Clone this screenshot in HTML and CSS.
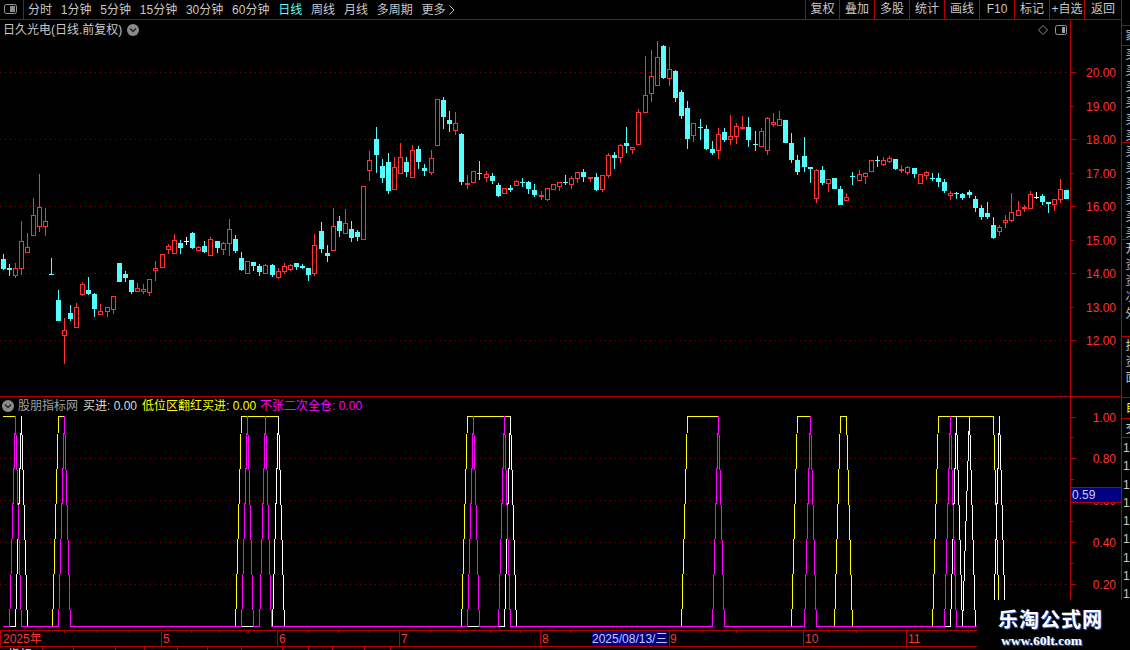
FILE: index.html
```html
<!DOCTYPE html>
<html lang="zh">
<head>
<meta charset="utf-8">
<title>日久光电</title>
<link rel="stylesheet" href="styles.css">
</head>
<body>
<div class="app">
  <div class="main">
    <header class="toolbar">
      <button class="layout-btn">
        <svg class="pane-icon" width="13" height="10" viewBox="0 0 13 10"><rect x="0.5" y="0.5" width="12" height="9" rx="2" fill="none" stroke="#9a9a9a"/><rect x="6" y="2" width="5" height="6" fill="#8c8c8c"/></svg>
      </button>
      <nav class="tabs">
        <span>分时</span><span>1分钟</span><span>5分钟</span><span>15分钟</span><span>30分钟</span><span>60分钟</span>
        <span class="active">日线</span><span>周线</span><span>月线</span><span>多周期</span>
        <span class="more">更多<svg width="6" height="10" viewBox="0 0 6 10"><polyline points="0.5,0.5 5,5 0.5,9.5" fill="none" stroke="#c8c8c8"/></svg></span>
      </nav>
      <div class="tools">
        <span>复权</span><span>叠加</span><span>多股</span><span>统计</span><span>画线</span><span>F10</span><span>标记</span><span>+自选</span><span>返回</span>
      </div>
    </header>

    <section class="panel panel-price">
      <div class="plot">
        <svg id="price-chart" class="chart" width="1070" height="376" viewBox="0 20 1070 376"></svg>
        <div class="legend">
          <span class="stock">日久光电(日线.前复权)</span>
          <svg class="round" width="12" height="12" viewBox="0 0 12 12"><circle cx="6" cy="6" r="6" fill="#8a8a8a"/><polyline points="3,4.5 6,7.5 9,4.5" fill="none" stroke="#222" stroke-width="1.4"/></svg>
        </div>
        <div class="plot-tools">
          <svg width="10" height="10" viewBox="0 0 10 10"><polygon points="5,0.5 9.5,5 5,9.5 0.5,5" fill="none" stroke="#8a8a8a"/></svg>
          <svg width="13" height="10" viewBox="0 0 13 10"><rect x="0.5" y="0.5" width="11" height="9" rx="2" fill="none" stroke="#9a9a9a"/><rect x="7" y="2" width="3" height="6" fill="#a0a0a0"/></svg>
        </div>
      </div>
      <div class="yaxis" id="price-axis"></div>
    </section>

    <section class="panel panel-indicator">
      <div class="plot">
        <svg id="indicator-chart" class="chart" width="1070" height="233" viewBox="0 397 1070 233"></svg>
        <div class="legend legend-indicator">
          <svg class="round" width="12" height="12" viewBox="0 0 12 12"><circle cx="6" cy="6" r="6" fill="#8a8a8a"/><polyline points="3,4.5 6,7.5 9,4.5" fill="none" stroke="#222" stroke-width="1.4"/></svg>
          <span class="name">股朋指标网</span>
          <span class="white">买进: 0.00</span>
          <span class="yellow">低位区翻红买进: 0.00</span>
          <span class="magenta">不张二次全仓: 0.00</span>
        </div>
      </div>
      <div class="yaxis" id="indicator-axis">
        <div class="cursor-value">0.59</div>
      </div>
    </section>

    <div class="timeaxis" id="timeaxis"></div>
    <div class="footer" id="footer"></div>
  </div>

  <aside class="sidebar">
    <div class="cell c1"><span>家</span></div>
    <div class="cell c2"><span>买买买买买买</span></div>
    <div class="cell c2"><span>买买买买买买</span></div>
    <div class="cell c2"><span>开资资况外</span></div>
    <div class="cell c3"><span>技资面</span></div>
    <div class="cell c4"><span>自</span></div>
    <div class="cell c5"><span>交</span></div>
    <div class="numbers"><span>1</span><span>1</span><span>1</span><span>1</span><span>1</span><span>1</span><span>1</span><span>1</span><span>1</span></div>
  </aside>

  <div class="watermark">
    <div class="wm-title">乐淘公式网</div>
    <div class="wm-url">www.60lt.com</div>
  </div>
</div>
<script src="chart.js"></script>
</body>
</html>
```

FILE: styles.css
```css
* { box-sizing: border-box; }
html, body { margin: 0; padding: 0; background: #000; }
body { width: 1130px; height: 650px; overflow: hidden; }

.app {
  position: relative;
  display: flex;
  width: 1130px;
  height: 650px;
  overflow: hidden;
  background: #000;
  color: #c8c8c8;
  font: 12px/14px "Liberation Sans", "Noto Sans CJK SC", sans-serif;
}

.main {
  display: flex;
  flex-direction: column;
  flex: 0 0 1122px;
  height: 650px;
  border-right: 1px solid #b40000;
}

/* toolbar */
.toolbar {
  display: flex;
  align-items: center;
  flex: 0 0 20px;
  border-bottom: 1px solid #b40000;
}
.layout-btn {
  display: flex;
  align-items: center;
  justify-content: center;
  flex: 0 0 24px;
  height: 19px;
  margin: 0;
  padding: 0 2px 1px 0;
  background: none;
  border: 0;
  border-right: 1px solid #b40000;
}
.tabs {
  display: flex;
  gap: 8.8px;
  padding-left: 4px;
  white-space: nowrap;
}
.tabs .active { color: #55ffff; }
.more { display: inline-flex; align-items: center; gap: 3px; }
.tools { display: flex; margin-left: auto; height: 19px; }
.tools span {
  flex: 0 0 35px;
  line-height: 18px;
  text-align: center;
  border-left: 1px solid #b40000;
  white-space: nowrap;
}
.tools span:first-child { flex-basis: 34px; }
.tools span:last-child { flex-basis: 37px; }

/* panels */
.panel { display: flex; }
.panel-price { flex: 0 0 376px; }
.panel-indicator { flex: 0 0 234px; border-top: 1px solid #b40000; }
.plot { position: relative; flex: 0 0 1070px; }
.chart { display: block; shape-rendering: crispEdges; }
.yaxis {
  position: relative;
  flex: 1;
  border-left: 1px solid #b40000;
}
.ylabel {
  position: absolute;
  right: 5px;
  height: 14px;
  color: #ff3232;
  line-height: 14px;
}
.tick { position: absolute; left: 0; height: 1px; background: #b40000; }
.tick.major { width: 5px; }
.tick.minor { width: 3px; }
.cursor-value {
  position: absolute;
  z-index: 2;
  top: 90px;
  left: 0;
  right: 0;
  height: 16px;
  padding-left: 1px;
  background: #000080;
  border-top: 1px solid #b40000;
  border-bottom: 1px solid #b40000;
  color: #c8c8ff;
  line-height: 14px;
}

/* legends */
.legend {
  position: absolute;
  top: 3px;
  left: 3px;
  display: flex;
  align-items: center;
  gap: 5px;
  white-space: nowrap;
}
.legend .round { flex: none; }
.legend-indicator { top: 2px; left: 2px; gap: 5px; }
.legend-indicator .round { margin-right: -1px; }
.name { color: #a0a0a0; }
.white { color: #dcdcdc; }
.yellow { color: #ffff00; }
.magenta { color: #ff00ff; margin-left: -1px; }
.plot-tools {
  position: absolute;
  top: 5px;
  right: 2px;
  display: flex;
  gap: 7px;
}
.plot-tools svg { display: block; }

/* time axis */
.timeaxis {
  position: relative;
  flex: 0 0 17px;
  border-top: 1px solid #b40000;
  border-bottom: 1px solid #b40000;
}
.tlabel {
  position: absolute;
  top: 1px;
  color: #ff3232;
  line-height: 14px;
  white-space: nowrap;
}
.tlabel.date { background: #000080; color: #c8c8ff; }
.tmark { position: absolute; top: 0; width: 1px; height: 2px; background: #b40000; }
.tmark.month { height: 15px; }

.footer { display: flex; flex: 1; overflow: hidden; }
.footer span {
  flex: none;
  height: 14px;
  padding: 1px 0 0 8px;
  border-right: 1px solid #b40000;
  color: #e0e0e0;
  line-height: 14px;
}

/* sidebar */
.sidebar {
  display: flex;
  flex-direction: column;
  flex: 1;
  padding-top: 25px;
  overflow: hidden;
}
.cell {
  flex: none;
  overflow: hidden;
  border-top: 1px solid #b40000;
  width: 12px;
}
.cell span {
  display: block;
  padding-left: 1px;
  writing-mode: vertical-lr;
  text-orientation: upright;
  letter-spacing: 4.3px;
  white-space: nowrap;
}
.c1 { height: 20px; }
.c1 span { padding-top: 3px; }
.c2 { height: 97px; }
.c2 span { padding-top: 2px; }
.c3 { height: 61px; }
.c3 span { padding-top: 2px; }
.c4 { height: 21px; border-top-color: #b40000; color: #ffff00; }
.c4 span { padding-top: 3px; }
.c5 { height: 20px; border-bottom: 1px solid #b40000; }
.c5 span { padding-top: 3px; }
.numbers { display: flex; flex-direction: column; padding: 1px 0 0 1px; }
.numbers span { flex: 0 0 18.3px; line-height: 18.3px; }

/* watermark */
.watermark {
  position: absolute;
  left: 977px;
  top: 600px;
  z-index: 3;
  width: 153px;
  height: 50px;
  padding-left: 21px;
  background: #000;
  color: #fff;
  font-weight: 700;
}
.wm-title {
  margin-top: 7px;
  font: 700 20px/24px "Noto Sans CJK SC", sans-serif;
  letter-spacing: 1px;
  text-shadow: 1px 1px 1px #3a6ed0;
}
.wm-url {
  margin: 2px 0 0 3px;
  font: 700 13.5px/15px "Liberation Serif", serif;
  text-shadow: 1px 1px 1px #3a6ed0;
}
```

FILE: chart.js
```js
var NS = 'http://www.w3.org/2000/svg';
var RED = '#ff3333', CYAN = '#55ffff', WHITE = '#ffffff';
var GRID = '#960000';

/* candles measured per crop: [ox, oy, [type, x, high, top, bottom, low]...] in thirds of a pixel */
var zones = [
  [0, 170, [
    'c',10,252,267,297,300, 'c',28,282,293,300,318, 'r',46,279,295,317,324, 'r',64,153,214,296,315,
    'r',82,190,232,248,248, 'r',100,84,136,197,197, 'r',118,12,112,170,186, 'r',136,114,154,170,197,
    'c',154,264,312,315,315, 'c',175,360,390,453,453, 'r',193,444,481,497,582, 'c',211,405,429,447,453,
    'r',229,400,412,473,473, 'r',247,336,343,374,378, 'c',265,321,360,372,375, 'c',283,369,372,417,441,
    'r',301,402,424,434,434, 'r',322,411,412,426,441, 'r',340,379,379,419,432, 'c',358,279,279,336,336,
    'c',376,303,312,324,336, 'c',394,330,330,366,372, 'r',412,339,355,365,365, 'r',430,342,358,366,372,
    'r',448,327,328,368,378, 'r',466,273,295,302,333, 'r',487,252,253,293,293, 'r',505,222,229,239,252,
    'r',523,192,211,251,251, 'c',541,210,220,234,252, 'w',559,201,212,215,225, 'c',577,186,189,234,237,
    'r',595,229,232,242,242
  ]],
  [200, 90, [
    'c',13,453,468,486,489, 'r',31,441,448,497,497, 'c',52,453,453,474,489, 'r',70,456,460,479,495,
    'r',88,387,418,461,498, 'c',106,435,447,483,489, 'c',124,486,504,540,543, 'r',142,514,514,551,551,
    'c',160,516,516,528,543, 'c',178,522,528,546,558, 'r',196,522,526,551,551, 'c',217,522,525,555,561,
    'r',235,534,544,564,567, 'r',253,519,529,545,551, 'r',271,522,526,539,543, 'c',289,519,519,531,540,
    'c',307,522,528,534,537, 'c',325,534,534,555,573, 'r',343,432,466,551,558, 'c',364,396,423,477,489,
    'c',382,465,489,498,516, 'r',400,354,409,482,482, 'c',418,378,393,423,441, 'r',436,357,400,433,433,
    'c',454,393,417,444,456, 'c',472,420,426,441,453, 'r',490,289,289,449,449, 'r',508,183,211,242,273,
    'c',529,111,147,195,249, 'c',547,207,228,264,279, 'c',565,189,216,303,312, 'r',583,201,232,299,299,
    'r',601,159,202,251,251, 'c',619,201,216,246,261, 'r',637,165,181,263,263, 'c',655,168,177,216,237,
    'c',673,222,234,243,258, 'r',694,180,205,248,255, 'r',712,27,27,167,167, 'c',730,21,30,81,117,
    'c',748,63,90,102,126, 'r',766,66,100,122,135, 'c',784,129,132,276,285, 'r',802,255,280,285,297,
    'r',820,244,244,278,278, 'c',838,213,249,252,270, 'r',859,243,253,263,276, 'c',877,249,258,273,282,
    'c',895,279,285,318,321
  ]],
  [500, 40, [
    'r',13,445,445,461,461, 'c',31,435,444,450,456, 'r',49,420,424,437,437, 'c',67,414,426,429,441,
    'c',85,423,426,447,462, 'c',103,432,450,465,471, 'r',124,453,466,470,480, 'r',142,445,445,480,483,
    'r',160,433,433,449,449, 'r',178,427,427,440,453, 'c',196,405,426,429,435, 'r',214,408,415,434,447,
    'r',232,397,397,418,429, 'c',250,387,396,411,426, 'r',271,412,412,418,426, 'c',289,400,411,450,453,
    'r',307,405,406,449,456, 'r',325,340,346,407,414, 'c',343,336,345,354,387, 'r',361,312,316,353,369,
    'c',379,261,309,318,339, 'r',397,322,322,329,342, 'r',415,207,217,314,314, 'r',436,48,166,218,218,
    'r',454,30,109,161,186, 'r',472,3,52,137,137, 'c',490,15,18,114,117, 'r',508,21,88,116,138,
    'c',526,90,93,174,186, 'c',544,150,156,228,237, 'c',562,183,204,297,327, 'r',580,250,250,287,306,
    'c',601,237,261,264,300, 'c',619,255,267,327,330, 'c',637,303,327,339,345, 'r',655,264,283,332,357,
    'c',673,264,276,300,306, 'r',691,225,289,299,315, 'r',709,250,259,292,312, 'r',727,228,261,264,270,
    'c',745,231,261,300,321, 'c',766,273,312,315,333, 'r',784,264,274,320,321, 'r',802,231,235,332,345,
    'r',820,219,247,255,261, 'r',838,213,238,257,258, 'c',856,240,240,309,309, 'c',874,279,309,360,369,
    'c',892,345,360,396,405
  ]],
  [790, 110, [
    'c',43,81,138,171,186, 'c',61,171,171,176,219, 'r',79,178,181,268,279, 'c',97,168,180,219,225,
    'r',115,207,207,221,246, 'c',133,204,204,237,237, 'c',151,228,237,285,285, 'r',169,249,262,272,272,
    'c',187,186,198,201,225, 'r',208,180,193,213,213, 'r',226,186,189,201,222, 'r',244,150,151,185,185,
    'c',262,138,150,153,171, 'r',280,141,150,165,168, 'r',298,138,144,156,159, 'c',316,147,147,177,180,
    'r',334,165,178,181,189, 'r',352,168,171,189,195, 'c',373,174,174,192,204, 'r',391,192,192,221,221,
    'r',409,183,186,198,210, 'c',427,189,204,207,213, 'c',445,189,204,216,231, 'c',463,207,216,243,249,
    'r',481,243,249,258,270, 'c',499,246,249,252,267, 'c',517,249,252,264,270, 'c',538,240,246,255,264,
    'c',556,258,267,294,306, 'c',574,285,294,321,330, 'c',592,276,309,321,327, 'c',610,321,345,384,387,
    'r',628,345,351,366,378, 'r',646,315,331,339,354, 'r',664,249,307,332,336, 'r',685,273,301,317,318,
    'r',703,285,292,296,306, 'r',721,243,253,296,297, 'w',739,246,261,264,267, 'c',757,252,258,276,285,
    'c',775,276,276,282,309, 'r',793,268,268,285,303, 'r',811,207,238,269,279, 'c',829,240,240,267,267
  ]]
];

function el(parent, name, attrs) {
  var node = document.createElementNS(NS, name);
  for (var key in attrs) node.setAttribute(key, attrs[key]);
  parent.appendChild(node);
  return node;
}

function grid(svg, ys) {
  ys.forEach(function (y) {
    el(svg, 'line', { x1: 0, x2: 1067, y1: y + 0.5, y2: y + 0.5, stroke: GRID, 'stroke-dasharray': '1 4' });
  });
}

function segment(svg, x, y1, y2, color) {
  if (y2 > y1) el(svg, 'line', { x1: x, x2: x, y1: y1, y2: y2, stroke: color });
}

function drawCandles(svg) {
  zones.forEach(function (zone) {
    var ox = zone[0], oy = zone[1], d = zone[2];
    for (var i = 0; i < d.length; i += 6) {
      var type = d[i];
      var cx = Math.floor(ox + d[i + 1] / 3) + 0.5;
      var hi = Math.round(oy + d[i + 2] / 3);
      var top = Math.round(oy + d[i + 3] / 3);
      var bot = Math.round(oy + d[i + 4] / 3);
      var lo = Math.round(oy + d[i + 5] / 3);
      if (bot <= top) bot = top + 1;
      var color = type === 'r' ? RED : type === 'w' ? WHITE : CYAN;
      segment(svg, cx, hi, top, color);
      segment(svg, cx, bot, lo, color);
      if (type === 'r') {
        el(svg, 'rect', { x: cx - 2, y: top + 0.5, width: 4, height: Math.max(bot - top - 1, 1), fill: '#000', stroke: color });
      } else {
        el(svg, 'rect', { x: cx - 2.5, y: top, width: 5, height: bot - top, fill: color });
      }
    }
  });
}

/* indicator: each pulse is [first high bar, last high bar]; bars are 6px apart */
var ZERO = 626.5, ONE = 416.5, START = 3, END = 977;

function pulses(list, startHigh) {
  var pts = [];
  pts.push([START, startHigh ? ONE : ZERO]);
  list.forEach(function (p) {
    var a = Math.floor(p[0]) + 0.5, b = Math.floor(p[1]) + 0.5;
    if (!(startHigh && p === list[0])) {
      pts.push([a - (p[2] || 6), ZERO]);
      pts.push([a, ONE]);
    }
    pts.push([b, ONE]);
    pts.push([b + (p[3] || 6), ZERO]);
  });
  pts.push([END, ZERO]);
  return pts.map(function (q) { return q[0] + ',' + q[1]; }).join(' ');
}

function drawIndicator(svg) {
  grid(svg, [458, 500, 542, 584]);
  var yellow = [[3, 15], [58, 64], [241, 278], [467, 510], [687, 718], [797, 810], [840, 846], [938, 993]];
  var white = [[21, 21], [64, 64], [265, 265, 6, 6], [278, 278], [510, 510], [718, 718], [810, 810], [956, 956], [969, 969, 7, 6], [999, 999]];
  var magenta = [[15, 15], [64, 64], [247, 247], [265, 265, 6, 6], [473, 473], [504, 504], [718, 718], [810, 810], [950, 950]];
  el(svg, 'polyline', { points: pulses(yellow, true), fill: 'none', stroke: '#ffff00' });
  el(svg, 'polyline', { points: pulses(white, false), fill: 'none', stroke: '#ffffff' });
  el(svg, 'polyline', { points: pulses(magenta, false), fill: 'none', stroke: '#ff00ff' });
}

function addLabel(axis, text, y, panelTop) {
  var label = document.createElement('div');
  label.className = 'ylabel';
  label.textContent = text;
  label.style.top = (y - panelTop - 6) + 'px';
  axis.insertBefore(label, axis.firstChild);
}

function addTick(axis, y, panelTop, kind) {
  var tick = document.createElement('div');
  tick.className = 'tick ' + kind;
  tick.style.top = (y - panelTop) + 'px';
  axis.appendChild(tick);
}

/* price chart */
var price = document.getElementById('price-chart');
grid(price, [72, 139, 206, 273, 340]);
drawCandles(price);
var priceAxis = document.getElementById('price-axis');
[[72, '20.00'], [106, '19.00'], [139, '18.00'], [173, '17.00'], [206, '16.00'], [240, '15.00'], [273, '14.00'], [307, '13.00'], [340, '12.00']]
  .forEach(function (row, i) {
    addLabel(priceAxis, row[1], row[0], 20);
    addTick(priceAxis, row[0], 20, i % 2 ? 'minor' : 'major');
  });

/* indicator */
drawIndicator(document.getElementById('indicator-chart'));
var indAxis = document.getElementById('indicator-axis');
[[417, '1.00'], [458, '0.80'], [500, '0.60'], [542, '0.40'], [584, '0.20']].forEach(function (row) {
  addLabel(indAxis, row[1], row[0], 397);
  addTick(indAxis, row[0], 397, 'major');
});
[437, 479, 521, 563].forEach(function (y) { addTick(indAxis, y, 397, 'minor'); });

/* time axis */
var axis = document.getElementById('timeaxis');
function mark(x, month) {
  var m = document.createElement('div');
  m.className = month ? 'tmark month' : 'tmark';
  m.style.left = x + 'px';
  axis.appendChild(m);
}
[0, 161, 277, 399, 540, 669, 803, 906].forEach(function (x) { mark(x, true); });
[64, 97, 129, 191, 219, 248, 308, 338, 369, 430, 460, 490, 520, 570, 600, 635, 702, 736, 769, 829, 856, 937, 968]
  .forEach(function (x) { mark(x, false); });
[['2025年', 3], ['5', 163], ['6', 279], ['7', 401], ['8', 542], ['9', 670], ['10', 805], ['11', 908]].forEach(function (row) {
  var t = document.createElement('div');
  t.className = 'tlabel';
  t.textContent = row[0];
  t.style.left = row[1] + 'px';
  axis.appendChild(t);
});
var date = document.createElement('div');
date.className = 'tlabel date';
date.textContent = '2025/08/13/三';
date.style.left = '592px';
axis.appendChild(date);

/* bottom tab strip: only the top edge is inside the window */
var footer = document.getElementById('footer');
[[43, '指标'], [31, ''], [42, ''], [29, ''], [33, ''], [30, ''], [34, ''], [41, ''], [26, ''], [24, ''], [32, ''], [26, '']].forEach(function (row) {
  var s = document.createElement('span');
  s.textContent = row[1];
  s.style.width = row[0] + 'px';
  footer.appendChild(s);
});
```
